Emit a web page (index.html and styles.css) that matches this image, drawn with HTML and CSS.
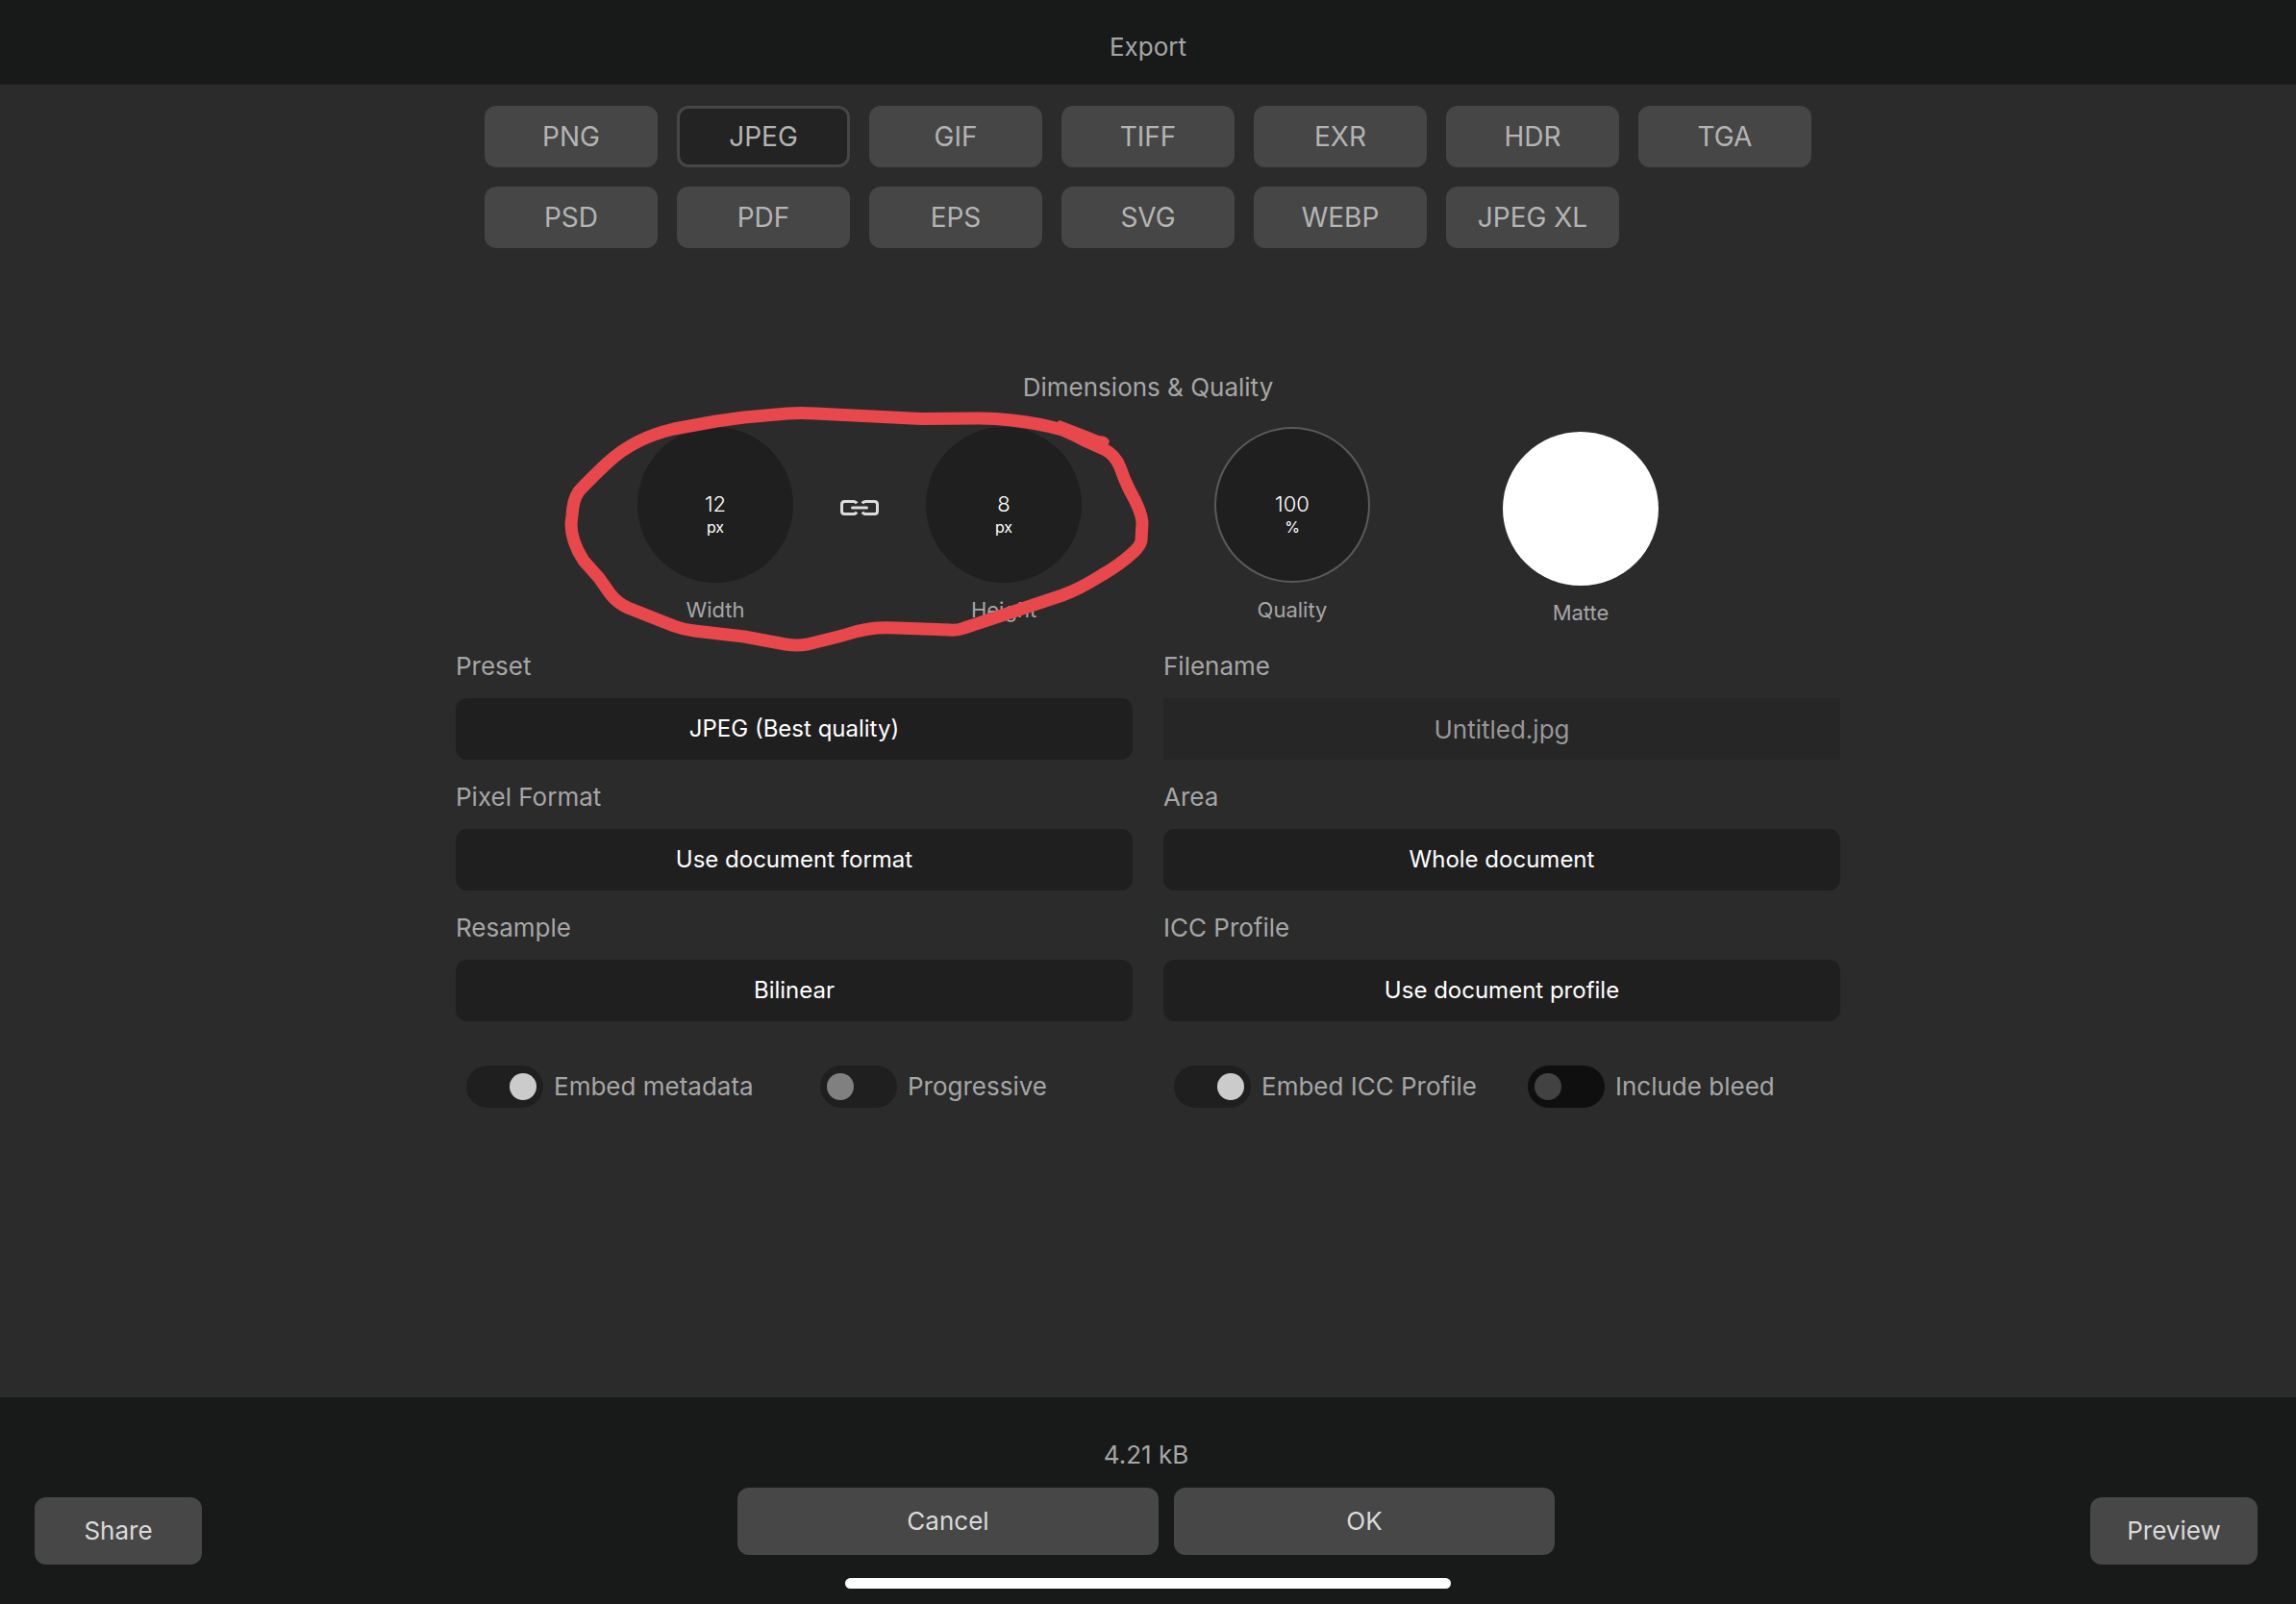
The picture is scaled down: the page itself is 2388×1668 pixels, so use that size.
FILE: index.html
```
<!DOCTYPE html>
<html lang="en">
<head>
  <meta charset="UTF-8">
  <meta name="viewport" content="width=device-width, initial-scale=1.0">
  <title>Export</title>
  <link rel="stylesheet" href="styles.css">
</head>
<body>
  <header class="topbar">
    <h1>Export</h1>
  </header>

  <main>
    <div class="formats">
      <button type="button">PNG</button>
      <button type="button" class="selected">JPEG</button>
      <button type="button">GIF</button>
      <button type="button">TIFF</button>
      <button type="button">EXR</button>
      <button type="button">HDR</button>
      <button type="button">TGA</button>
      <button type="button">PSD</button>
      <button type="button">PDF</button>
      <button type="button">EPS</button>
      <button type="button">SVG</button>
      <button type="button">WEBP</button>
      <button type="button">JPEG XL</button>
    </div>

    <h2>Dimensions &amp; Quality</h2>

    <div class="dials">
      <div class="dial">
        <div class="knob">
          <input type="text" id="width" value="12">
          <span>px</span>
        </div>
        <label for="width">Width</label>
      </div>
      <div class="dial">
        <div class="knob">
          <input type="text" id="height" value="8">
          <span>px</span>
        </div>
        <label for="height">Height</label>
      </div>
      <div class="dial">
        <div class="knob ring">
          <input type="text" id="quality" value="100">
          <span>%</span>
        </div>
        <label for="quality">Quality</label>
      </div>
      <div class="dial matte">
        <button type="button" id="matte" class="swatch"></button>
        <label for="matte">Matte</label>
      </div>

      <button type="button" class="link" aria-label="Link width and height">
        <svg width="42" height="18" viewBox="0 0 42 18" fill="none" stroke="#dcdcdc" stroke-width="3">
          <path d="M18 4.5 Q17 2.500 14.500 2.500 H5.500 Q2.500 2.500 2.500 5.500 V12.500 Q2.500 15.500 5.500 15.500 H14.500 Q17 15.500 18 13.500"/>
          <path d="M24 4.500 Q25 2.500 27.500 2.500 H36.500 Q39.500 2.500 39.500 5.500 V12.500 Q39.500 15.500 36.500 15.500 H27.500 Q25 15.500 24 13.500"/>
          <path d="M13.500 9 H28.500" stroke-linecap="round"/>
        </svg>
      </button>

      <!-- red marker round width and height -->
      <svg class="marker" width="620" height="260" viewBox="580 420 620 260">
        <path fill="none" stroke="#e8474c" stroke-width="13" stroke-linejoin="round" d="M819 430 Q833 429 848 430 L958 435.500 L1019 435 Q1036 435 1052 437 Q1080 440 1105 447 Q1117 452 1128 458 L1148 467 Q1160 473 1165 486 Q1169 498 1175 510 Q1187 531 1188 543 L1187 562 Q1186 568 1178 575 Q1165 587 1146 598 Q1122 613 1105 619 L1060 634 L1003 653 Q995 656 987 655 L933 653 Q915 652 904 654 Q890 656 876 661 L840 670 Q829 672 817 670 L774 662 L722 656 Q712 655 701 651 L653 632 Q642 627 635 618 L623 601 L607 583 Q594 563 594 545 L595 536 Q596 519 602 511 Q610 502 631 482 Q646 468 664 459 Q680 451 701 446 L745 438 L774 434 Z"/>
        <path fill="#e8474c" d="M1098 440 L1102 437 L1128 447 L1143 453 Q1152 453 1154 459 L1150 468 L1104 450 Z"/>
      </svg>
    </div>

    <form class="settings">
      <div class="field">
        <label for="preset">Preset</label>
        <select id="preset"><option>JPEG (Best quality)</option></select>
      </div>
      <div class="field">
        <label for="filename">Filename</label>
        <input type="text" id="filename" value="Untitled.jpg">
      </div>
      <div class="field">
        <label for="pixelFormat">Pixel Format</label>
        <select id="pixelFormat"><option>Use document format</option></select>
      </div>
      <div class="field">
        <label for="area">Area</label>
        <select id="area"><option>Whole document</option></select>
      </div>
      <div class="field">
        <label for="resample">Resample</label>
        <select id="resample"><option>Bilinear</option></select>
      </div>
      <div class="field">
        <label for="iccProfile">ICC Profile</label>
        <select id="iccProfile"><option>Use document profile</option></select>
      </div>
    </form>

    <div class="toggles">
      <label><input type="checkbox" checked>Embed metadata</label>
      <label><input type="checkbox">Progressive</label>
      <label><input type="checkbox" checked>Embed ICC Profile</label>
      <label><input type="checkbox" disabled>Include bleed</label>
    </div>
  </main>

  <footer>
    <div class="actions">
      <button type="button" class="side">Share</button>
      <div class="center">
        <p>4.21 kB</p>
        <div class="buttons">
          <button type="button" class="cancel">Cancel</button>
          <button type="button" class="ok">OK</button>
        </div>
      </div>
      <button type="button" class="side">Preview</button>
    </div>
    <div class="home-bar"></div>
  </footer>
</body>
</html>
```
FILE: styles.css
```
* {
  box-sizing: border-box;
}
body {
  margin: 0;
  min-height: 100vh;
  display: flex;
  flex-direction: column;
  background: #2b2b2b;
  color: #a6a6a6;
  font-family: Inter, "Liberation Sans", sans-serif;
  font-size: 26px;
  line-height: 32px;
}
h1, h2, p {
  margin: 0;
  font-size: 26px;
  font-weight: 400;
  text-align: center;
}
button, input, select {
  margin: 0;
  padding: 0;
  border: none;
  font: inherit;
}
.topbar {
  height: 88px;
  padding-top: 33px;
  background: #181a19;
}
main {
  flex: 1;
  padding: 22px 40px;
}
.formats {
  display: grid;
  grid-template-columns: repeat(7, 1fr);
  gap: 20px;
  max-width: 1380px;
  margin: 0 auto 129px;
}
.formats button {
  height: 64px;
  border-radius: 12px;
  background: #464646;
  color: #b4b4b4;
  font-size: 28px;
}
.formats .selected {
  border: 3px solid #464646;
  background: #232323;
}

/* dials */
.dials {
  position: relative;
  display: grid;
  grid-template-columns: repeat(4, 1fr);
  max-width: 1200px;
  margin: 25px auto 26px;
}
.dial {
  display: flex;
  flex-direction: column;
  align-items: center;
  gap: 14px;
  font-size: 22px;
  line-height: 28px;
}
.knob {
  display: flex;
  flex-direction: column;
  align-items: center;
  width: 162px;
  height: 162px;
  padding-top: 66px;
  border-radius: 50%;
  background: #1f1f1f;
  color: #fff;
}
.knob input {
  width: 100px;
  height: 28px;
  background: none;
  color: #fff;
  font-weight: 300;
  text-align: center;
}
.knob span {
  font-size: 16px;
  line-height: 20px;
}
.ring {
  padding-top: 64px;
  border: 2px solid #5a5a5a;
}
.matte {
  padding-top: 5px;
}
.swatch {
  width: 162px;
  height: 160px;
  border-radius: 50%;
  background: #fff;
}
.link {
  position: absolute;
  left: 25%;
  top: 75px;
  width: 42px;
  height: 18px;
  margin-left: -21px;
  background: none;
}
.link svg {
  display: block;
}
.marker {
  position: absolute;
  left: -14px;
  top: -24px;
  pointer-events: none;
}

/* settings */
.settings {
  display: grid;
  grid-template-columns: 1fr 1fr;
  gap: 23px 32px;
  max-width: 1440px;
  margin: 0 auto 46px;
}
.field {
  display: flex;
  flex-direction: column;
  gap: 17px;
}
.field select, .field input {
  width: 100%;
  height: 64px;
  text-align: center;
}
.field select {
  appearance: none;
  border-radius: 12px;
  background: #1f1f1f;
  color: #fff;
  font-size: 24px;
  text-align-last: center;
}
.field input {
  background: #262626;
  color: #989898;
}
.toggles {
  display: grid;
  grid-template-columns: repeat(4, 1fr);
  gap: 32px;
  max-width: 1440px;
  margin: 0 auto;
}
.toggles label {
  display: flex;
  align-items: center;
  gap: 11px;
  padding-left: 11px;
  white-space: nowrap;
}
.toggles input {
  appearance: none;
  display: flex;
  align-items: center;
  width: 80px;
  height: 44px;
  padding: 0 7px;
  border-radius: 22px;
  background: #1f1f1f;
}
.toggles input::before {
  content: "";
  width: 28px;
  height: 28px;
  border-radius: 50%;
  background: #808080;
}
.toggles input:checked {
  justify-content: flex-end;
}
.toggles input:checked::before {
  background: #cbcbcb;
}
.toggles input:disabled {
  background: #0f0f0f;
}
.toggles input:disabled::before {
  background: #424242;
}

/* footer */
footer {
  padding: 44px 0 16px;
  background: #181a19;
}
.actions {
  display: flex;
  justify-content: space-between;
  align-items: flex-end;
  padding: 0 40px 0 36px;
}
.actions button {
  height: 70px;
  border-radius: 12px;
  background: #474747;
  color: #dadada;
}
.actions .side {
  width: 174px;
}
.center {
  padding-bottom: 10px;
}
.buttons {
  display: flex;
  gap: 16px;
  margin-top: 18px;
}
.buttons .cancel {
  width: 438px;
}
.buttons .ok {
  width: 396px;
}
.home-bar {
  width: 630px;
  height: 11px;
  margin: 14px auto 0;
  border-radius: 6px;
  background: #fff;
}
```
